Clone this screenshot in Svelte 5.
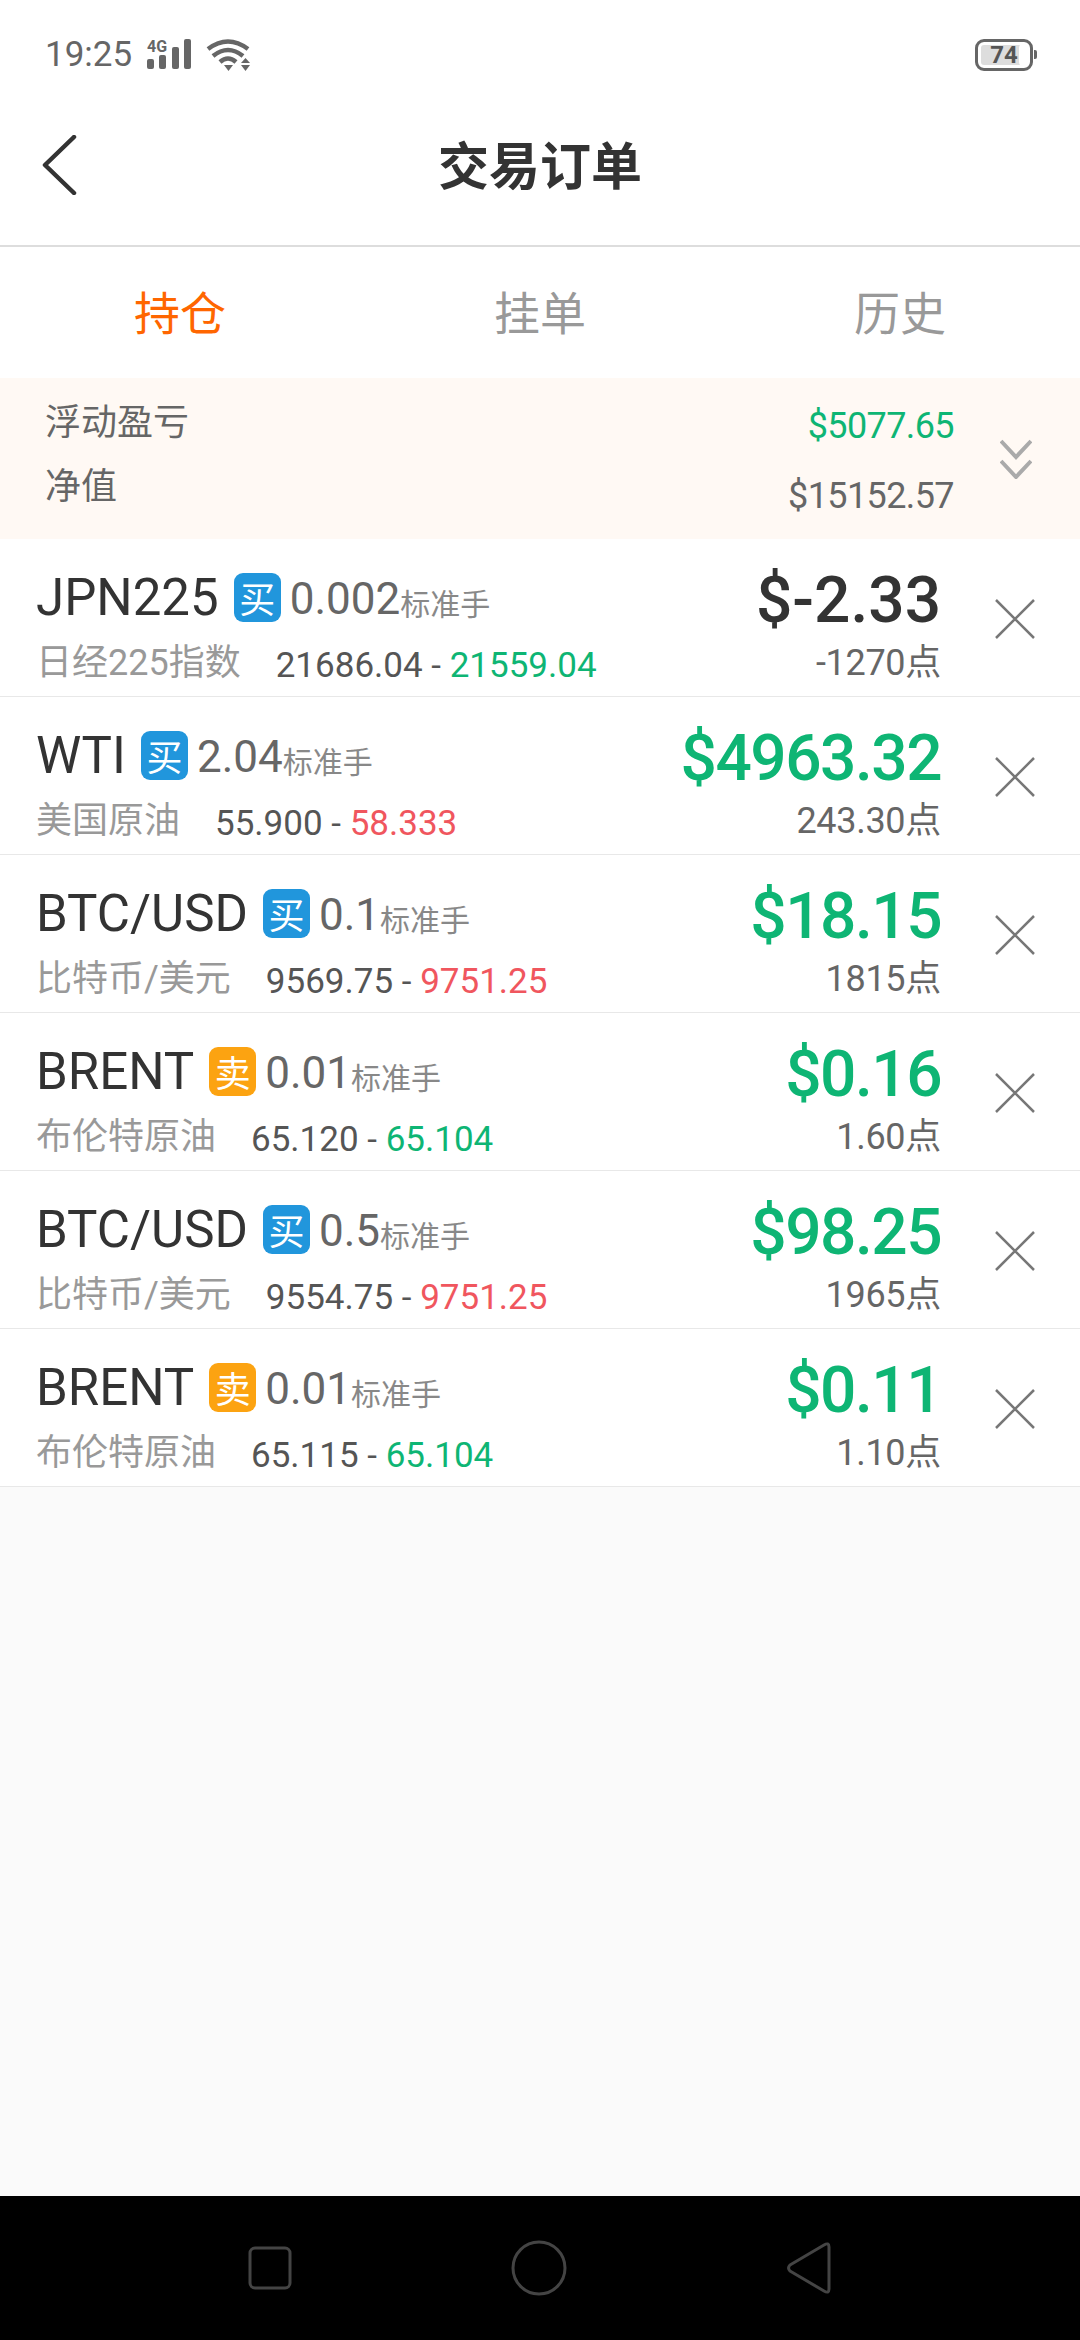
<script>
  const orders = [
    { name: 'JPN225', side: 'buy', lots: '0.002', label: '日经225指数', open: '21686.04', now: '21559.04', nowDir: 'up', profit: '$-2.33', loss: true, pts: '-1270点' },
    { name: 'WTI', side: 'buy', lots: '2.04', label: '美国原油', open: '55.900', now: '58.333', nowDir: 'down', profit: '$4963.32', pts: '243.30点' },
    { name: 'BTC/USD', side: 'buy', lots: '0.1', label: '比特币/美元', open: '9569.75', now: '9751.25', nowDir: 'down', profit: '$18.15', pts: '1815点' },
    { name: 'BRENT', side: 'sell', lots: '0.01', label: '布伦特原油', open: '65.120', now: '65.104', nowDir: 'up', profit: '$0.16', pts: '1.60点' },
    { name: 'BTC/USD', side: 'buy', lots: '0.5', label: '比特币/美元', open: '9554.75', now: '9751.25', nowDir: 'down', profit: '$98.25', pts: '1965点' },
    { name: 'BRENT', side: 'sell', lots: '0.01', label: '布伦特原油', open: '65.115', now: '65.104', nowDir: 'up', profit: '$0.11', pts: '1.10点' }
  ];
</script>

<div class="page">
  <div class="status">
    <span class="time">19:25</span>
    <svg class="signal" width="46" height="34" viewBox="0 0 46 34">
      <text x="1" y="14" class="net">4G</text>
      <rect x="1" y="21" width="7" height="10" rx="2" />
      <rect x="13" y="17" width="7" height="14" rx="2" />
      <rect x="26" y="9" width="7" height="22" rx="2" />
      <rect x="38" y="1" width="7" height="30" rx="2" />
    </svg>
    <svg class="wifi" width="45" height="33" viewBox="0 0 45 33" fill="none" stroke="#666" stroke-width="4.500">
      <path d="M2 11 Q22 -4 42 11" />
      <path d="M7 18 Q22 6 37 18" />
      <path d="M14 24 Q22 17 30 24" />
      <path d="M18 27 L27 27 L22.500 33 Z" fill="#666" stroke="none" />
      <path d="M35 25 L44 25 L39.500 20 Z" fill="#666" stroke="none" />
      <path d="M35 27 L44 27 L39.500 33 Z" fill="#666" stroke="none" />
    </svg>
    <span class="grow"></span>
    <div class="battery"><span>74</span></div>
  </div>

  <header class="topbar">
    <svg class="back" width="36" height="60" viewBox="0 0 36 60" fill="none" stroke="#333" stroke-width="4.500" stroke-linecap="round" stroke-linejoin="round">
      <path d="M32 2 L3 30 L32 58" />
    </svg>
    <h1>交易订单</h1>
  </header>

  <nav class="tabs">
    <span class="tab active">持仓</span>
    <span class="tab">挂单</span>
    <span class="tab">历史</span>
  </nav>

  <section class="summary">
    <div class="labels">
      <span>浮动盈亏</span>
      <span>净值</span>
    </div>
    <div class="values">
      <span class="green">$5077.65</span>
      <span>$15152.57</span>
    </div>
    <svg class="chevrons" width="32" height="40" viewBox="0 0 32 40" fill="none" stroke="#aaa" stroke-width="4">
      <path d="M1 2 L16 18 L31 2" />
      <path d="M1 22 L16 38 L31 22" />
    </svg>
  </section>

  <ul class="orders">
    {#each orders as o}
      <li class="order">
        <div class="info">
          <div class="line1">
            <span class="name">{o.name}</span>
            <span class="badge {o.side}">{o.side === 'buy' ? '买' : '卖'}</span>
            <span class="lots">{o.lots}</span><span class="unit">标准手</span>
          </div>
          <div class="line2">
            <span class="label">{o.label}</span>
            <span class="prices">{o.open} - <span class={o.nowDir === 'up' ? 'green' : 'red'}>{o.now}</span></span>
          </div>
        </div>
        <div class="result">
          <span class="profit" class:gain={!o.loss}>{o.profit}</span>
          <span class="pts">{o.pts}</span>
        </div>
        <svg class="close" width="42" height="42" viewBox="0 0 42 42" stroke="#777" stroke-width="2.500" fill="none">
          <path d="M2 2 L40 40 M40 2 L2 40" />
        </svg>
      </li>
    {/each}
  </ul>

  <div class="empty"></div>

  <footer class="navbar">
    <svg width="44" height="44" viewBox="0 0 44 44" fill="none" stroke="#444" stroke-width="3">
      <rect x="2" y="2" width="40" height="40" rx="5" />
    </svg>
    <svg width="56" height="56" viewBox="0 0 56 56" fill="none" stroke="#444" stroke-width="3">
      <circle cx="28" cy="28" r="26" />
    </svg>
    <svg width="46" height="52" viewBox="0 0 46 52" fill="none" stroke="#444" stroke-width="3" stroke-linejoin="round">
      <path d="M43 5 L43 47 Q43 52 38 49 L4 29 Q1 26 4 23 L38 3 Q43 0 43 5 Z" />
    </svg>
  </footer>
</div>

<style>
  :global(body) {
    margin: 0;
    background: #fff;
  }

  .page {
    width: 1080px;
    height: 2340px;
    display: flex;
    flex-direction: column;
    font-family: Roboto, "Noto Sans CJK SC", sans-serif;
    overflow: hidden;
  }

  .status {
    height: 102px;
    box-sizing: border-box;
    padding: 7px 47px 0 45px;
    display: flex;
    align-items: center;
    gap: 14px;
    color: #666;
  }

  .time {
    font-size: 35px;
  }

  .signal rect {
    fill: #666;
  }

  .net {
    font-size: 16px;
    font-weight: 700;
    fill: #666;
  }

  .grow {
    flex: 1;
  }

  .battery {
    width: 52px;
    height: 26px;
    border: 3px solid #666;
    border-radius: 9px;
    position: relative;
    display: flex;
    align-items: center;
    justify-content: center;
    background: #fff;
    box-shadow: inset 0 0 0 3px #fff, inset 41px 0 0 #ddd;
  }

  .battery span {
    font-size: 24px;
    font-weight: 700;
    color: #555;
  }

  .battery::after {
    content: '';
    position: absolute;
    right: -7px;
    top: 8px;
    width: 3px;
    height: 9px;
    background: #666;
    border-radius: 0 2px 2px 0;
  }

  .topbar {
    height: 145px;
    box-sizing: border-box;
    padding-bottom: 22px;
    position: relative;
    display: flex;
    align-items: center;
    justify-content: center;
    border-bottom: 2px solid #ddd;
  }

  .back {
    position: absolute;
    left: 42px;
    top: 33px;
  }

  h1 {
    margin: 0;
    font-size: 51px;
    font-weight: 700;
    color: #333;
  }

  .tabs {
    height: 131px;
    box-sizing: border-box;
    padding-bottom: 5px;
    display: grid;
    grid-template-columns: repeat(3, 1fr);
    align-items: center;
    justify-items: center;
  }

  .tab {
    font-size: 46px;
    color: #999;
  }

  .tab.active {
    color: #f60;
  }

  .summary {
    height: 161px;
    box-sizing: border-box;
    background: #fff9f4;
    display: flex;
    align-items: center;
    padding: 0 48px 0 45px;
    font-size: 36px;
    line-height: 46px;
    color: #666;
  }

  .labels,
  .values {
    display: flex;
    flex-direction: column;
    align-self: flex-start;
  }

  .labels {
    flex: 1;
    gap: 18px;
    padding-top: 22px;
  }

  .values {
    align-items: flex-end;
    gap: 24px;
    padding-top: 25px;
    margin-right: 46px;
    letter-spacing: -0.6px;
  }

  .green {
    color: #0eb574;
  }

  .red {
    color: #f0565e;
  }

  .orders {
    list-style: none;
    margin: 0;
    padding: 0;
    background: #fff;
  }

  .order {
    height: 158px;
    box-sizing: border-box;
    border-bottom: 1.500px solid #e8e8e8;
    display: flex;
    align-items: center;
    padding: 0 44px 0 36px;
  }

  .info {
    flex: 1;
    min-width: 0;
    align-self: flex-start;
    padding-top: 22px;
  }

  .line1 {
    display: flex;
    align-items: center;
    height: 72px;
  }

  .name {
    font-size: 51px;
    color: #333;
  }

  .badge {
    width: 47px;
    height: 49px;
    border-radius: 9px;
    margin: 0 9px 0 15px;
    display: flex;
    align-items: center;
    justify-content: center;
    font-size: 36px;
    color: #fff;
  }

  .badge.buy {
    background: #2196dc;
  }

  .badge.sell {
    background: #fca311;
  }

  .lots {
    font-size: 44px;
    color: #666;
    padding-top: 4px;
  }

  .unit {
    font-size: 30px;
    color: #888;
    padding-top: 10px;
  }

  .line2 {
    display: flex;
    align-items: center;
    gap: 35px;
    height: 52px;
  }

  .label {
    font-size: 36px;
    color: #999;
  }

  .prices {
    font-size: 35px;
    color: #555;
    margin-top: 12px;
  }

  .result {
    display: flex;
    flex-direction: column;
    align-items: flex-end;
    align-self: flex-start;
    padding-top: 23px;
    margin-right: 53px;
  }

  .profit {
    font-size: 64px;
    font-weight: 500;
    line-height: 78px;
    color: #333;
  }

  .profit.gain {
    color: #0eb574;
    letter-spacing: -1.5px;
  }

  .pts {
    font-size: 36px;
    line-height: 38px;
    margin-top: 4px;
    letter-spacing: -0.3px;
    color: #666;
  }

  .close {
    margin-top: 2px;
  }

  .empty {
    flex: 1;
    background: #fafafa;
  }

  .navbar {
    height: 144px;
    background: #000;
    display: flex;
    align-items: center;
    justify-content: space-between;
    padding: 0 248px;
  }
</style>
